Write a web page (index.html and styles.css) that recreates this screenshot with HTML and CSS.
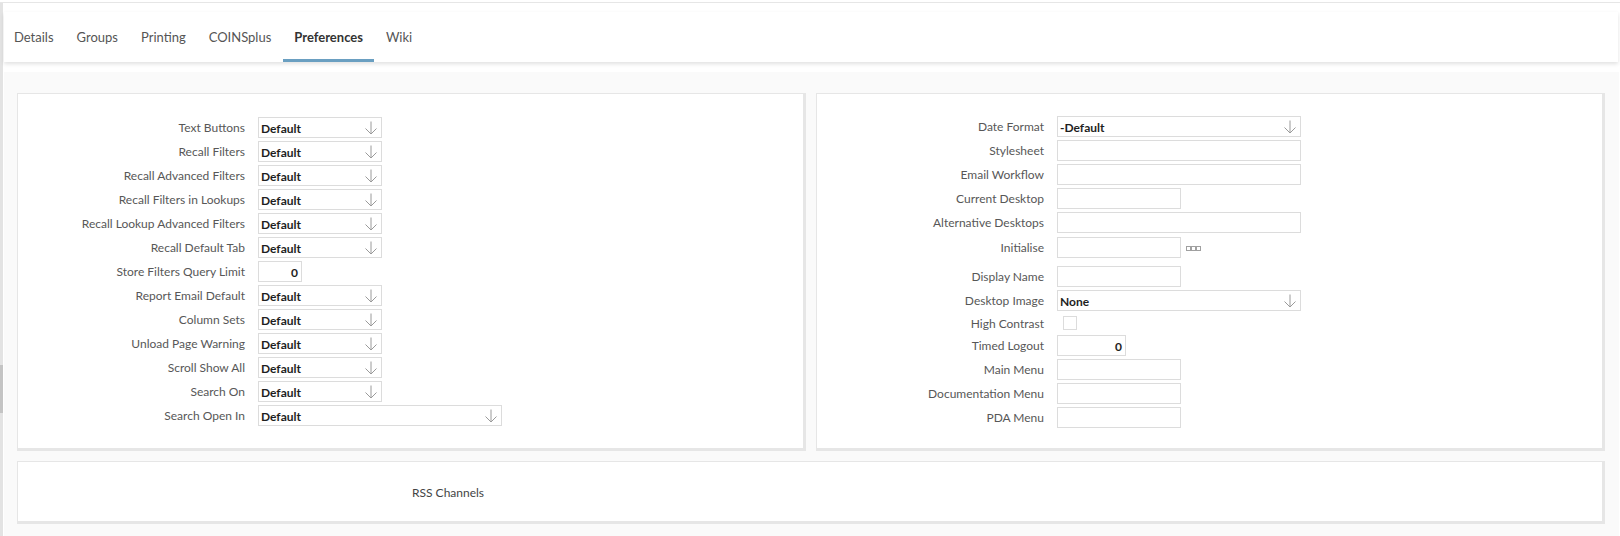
FILE: index.html
```html
<!DOCTYPE html>
<html>
<head>
<meta charset="utf-8">
<link rel="stylesheet" href="styles.css">
</head>
<body>
<div class="topline"></div>
<div class="frame">
  <div class="strip"><div class="thumb"></div></div>
  <div class="page">
    <nav class="tabs">
      <span class="tab">Details</span>
      <span class="tab">Groups</span>
      <span class="tab">Printing</span>
      <span class="tab">COINSplus</span>
      <span class="tab active">Preferences</span>
      <span class="tab">Wiki</span>
    </nav>
    <div class="content">
      <div class="panels">
        <section class="panel">
          <div class="row"><label class="lbl">Text Buttons</label><div class="sel">Default<svg class="arr" viewBox="0 0 12 14"><path d="M6 0.5V13M0.5 7.5L6 13L11.5 7.5"/></svg></div></div>
          <div class="row"><label class="lbl">Recall Filters</label><div class="sel">Default<svg class="arr" viewBox="0 0 12 14"><path d="M6 0.5V13M0.5 7.5L6 13L11.5 7.5"/></svg></div></div>
          <div class="row"><label class="lbl">Recall Advanced Filters</label><div class="sel">Default<svg class="arr" viewBox="0 0 12 14"><path d="M6 0.5V13M0.5 7.5L6 13L11.5 7.5"/></svg></div></div>
          <div class="row"><label class="lbl">Recall Filters in Lookups</label><div class="sel">Default<svg class="arr" viewBox="0 0 12 14"><path d="M6 0.5V13M0.5 7.5L6 13L11.5 7.5"/></svg></div></div>
          <div class="row"><label class="lbl">Recall Lookup Advanced Filters</label><div class="sel">Default<svg class="arr" viewBox="0 0 12 14"><path d="M6 0.5V13M0.5 7.5L6 13L11.5 7.5"/></svg></div></div>
          <div class="row"><label class="lbl">Recall Default Tab</label><div class="sel">Default<svg class="arr" viewBox="0 0 12 14"><path d="M6 0.5V13M0.5 7.5L6 13L11.5 7.5"/></svg></div></div>
          <div class="row"><label class="lbl">Store Filters Query Limit</label><div class="num num-short">0</div></div>
          <div class="row"><label class="lbl">Report Email Default</label><div class="sel">Default<svg class="arr" viewBox="0 0 12 14"><path d="M6 0.5V13M0.5 7.5L6 13L11.5 7.5"/></svg></div></div>
          <div class="row"><label class="lbl">Column Sets</label><div class="sel">Default<svg class="arr" viewBox="0 0 12 14"><path d="M6 0.5V13M0.5 7.5L6 13L11.5 7.5"/></svg></div></div>
          <div class="row"><label class="lbl">Unload Page Warning</label><div class="sel">Default<svg class="arr" viewBox="0 0 12 14"><path d="M6 0.5V13M0.5 7.5L6 13L11.5 7.5"/></svg></div></div>
          <div class="row"><label class="lbl">Scroll Show All</label><div class="sel">Default<svg class="arr" viewBox="0 0 12 14"><path d="M6 0.5V13M0.5 7.5L6 13L11.5 7.5"/></svg></div></div>
          <div class="row"><label class="lbl">Search On</label><div class="sel">Default<svg class="arr" viewBox="0 0 12 14"><path d="M6 0.5V13M0.5 7.5L6 13L11.5 7.5"/></svg></div></div>
          <div class="row"><label class="lbl">Search Open In</label><div class="sel wide">Default<svg class="arr" viewBox="0 0 12 14"><path d="M6 0.5V13M0.5 7.5L6 13L11.5 7.5"/></svg></div></div>
        </section>
        <section class="panel panel-right">
          <div class="row"><label class="lbl">Date Format</label><div class="sel wide">-Default<svg class="arr" viewBox="0 0 12 14"><path d="M6 0.5V13M0.5 7.5L6 13L11.5 7.5"/></svg></div></div>
          <div class="row"><label class="lbl">Stylesheet</label><div class="txt wide"></div></div>
          <div class="row"><label class="lbl">Email Workflow</label><div class="txt wide"></div></div>
          <div class="row"><label class="lbl">Current Desktop</label><div class="txt"></div></div>
          <div class="row"><label class="lbl">Alternative Desktops</label><div class="txt wide"></div></div>
          <div class="row row-init"><label class="lbl">Initialise</label><div class="txt"></div><svg class="dots" viewBox="0 0 16 5"><rect x="0.5" y="0.5" width="4" height="4"/><rect x="5.5" y="0.5" width="4" height="4"/><rect x="10.5" y="0.5" width="4" height="4"/></svg></div>
          <div class="row"><label class="lbl">Display Name</label><div class="txt"></div></div>
          <div class="row"><label class="lbl">Desktop Image</label><div class="sel wide">None<svg class="arr" viewBox="0 0 12 14"><path d="M6 0.5V13M0.5 7.5L6 13L11.5 7.5"/></svg></div></div>
          <div class="row row-check"><label class="lbl">High Contrast</label><div class="check"></div></div>
          <div class="row"><label class="lbl">Timed Logout</label><div class="num num-mid">0</div></div>
          <div class="row"><label class="lbl">Main Menu</label><div class="txt"></div></div>
          <div class="row"><label class="lbl">Documentation Menu</label><div class="txt"></div></div>
          <div class="row"><label class="lbl">PDA Menu</label><div class="txt"></div></div>
        </section>
      </div>
      <section class="panel rss">
        <span class="rss-label">RSS Channels</span>
      </section>
    </div>
  </div>
</div>
</body>
</html>
```

FILE: styles.css
```css
html, body {
  margin: 0;
  padding: 0;
  background: #ffffff;
  font-family: Lato, "Open Sans", "Liberation Sans", sans-serif;
}

.topline {
  height: 2px;
  border-bottom: 1px solid #e6e6e6;
}

.frame {
  display: flex;
  height: 533px;
  overflow: hidden;
}

.strip {
  width: 3px;
  background: #e3e3e3;
  display: flex;
  flex-direction: column;
  flex: none;
}

.thumb {
  margin-top: 362px;
  height: 48px;
  background: #c4c4c4;
}

.page {
  flex: 1;
  display: flex;
  flex-direction: column;
  padding: 9px 1px 0 1px;
}

.tabs {
  height: 51px;
  background: #ffffff;
  display: flex;
  align-items: stretch;
  margin-right: 1px;
  box-shadow: 0 2px 4px rgba(0, 0, 0, 0.12);
  position: relative;
  z-index: 1;
}

.tab {
  display: flex;
  align-items: center;
  padding: 3px 11px 0 11px;
  margin-right: 1px;
  font-size: 13px;
  color: #555555;
  border-bottom: 3px solid transparent;
}

.tab:first-child {
  padding-left: 10px;
}

.tab.active {
  font-weight: bold;
  color: #333333;
  border-bottom-color: #6a9fc1;
}

.content {
  margin-top: 10px;
  flex: 1;
  background: #fafafa;
  padding: 21px 14px 12px 13px;
}

.panels {
  display: grid;
  grid-template-columns: 1fr 1fr;
  gap: 10px;
}

.panel {
  background: #ffffff;
  border: 1px solid #e6e6e6;
  border-right-width: 3px;
  border-bottom-width: 3px;
  padding: 23px 0 20px 0;
  display: flex;
  flex-direction: column;
  gap: 3px;
}

.panel-right {
  padding-top: 22px;
}

.row {
  display: flex;
  align-items: center;
  height: 21px;
}

.row-init {
  height: 27px;
  align-items: flex-start;
  padding-top: 1px;
  box-sizing: border-box;
}

.row-init .lbl {
  height: 21px;
  display: flex;
  align-items: center;
  justify-content: flex-end;
}

.row-check {
  height: 18px;
}

.lbl {
  width: 227px;
  flex: none;
  text-align: right;
  font-size: 12px;
  color: #575757;
  margin-right: 13px;
}

.sel, .txt, .num {
  box-sizing: border-box;
  height: 21px;
  border: 1px solid #dcdcdc;
  background: #ffffff;
  font-size: 12px;
  font-weight: bold;
  color: #1e1e1e;
  display: flex;
  align-items: center;
  flex: none;
}

.sel {
  width: 124px;
  padding: 1px 4px 0 2px;
  justify-content: space-between;
}

.txt {
  width: 124px;
}

.wide {
  width: 244px;
}

.num {
  justify-content: flex-end;
  padding: 1px 3px 0 0;
}

.num-short {
  width: 44px;
}

.num-mid {
  width: 69px;
}

.arr {
  width: 12px;
  height: 14px;
  fill: none;
  stroke: #9a9a9a;
  stroke-width: 1;
}

.dots {
  width: 16px;
  height: 5px;
  margin-left: 5px;
  margin-top: 9px;
  fill: none;
  stroke: #a0a0a0;
  stroke-width: 1;
}

.check {
  box-sizing: border-box;
  width: 14px;
  height: 14px;
  border: 1px solid #dcdcdc;
  background: #ffffff;
  margin-left: 6px;
}

.rss {
  margin-top: 10px;
  height: 63px;
  box-sizing: border-box;
  padding: 0 0 0 394px;
  flex-direction: row;
  align-items: center;
}

.rss-label {
  font-size: 12px;
  color: #444444;
  padding-top: 2px;
}
```
